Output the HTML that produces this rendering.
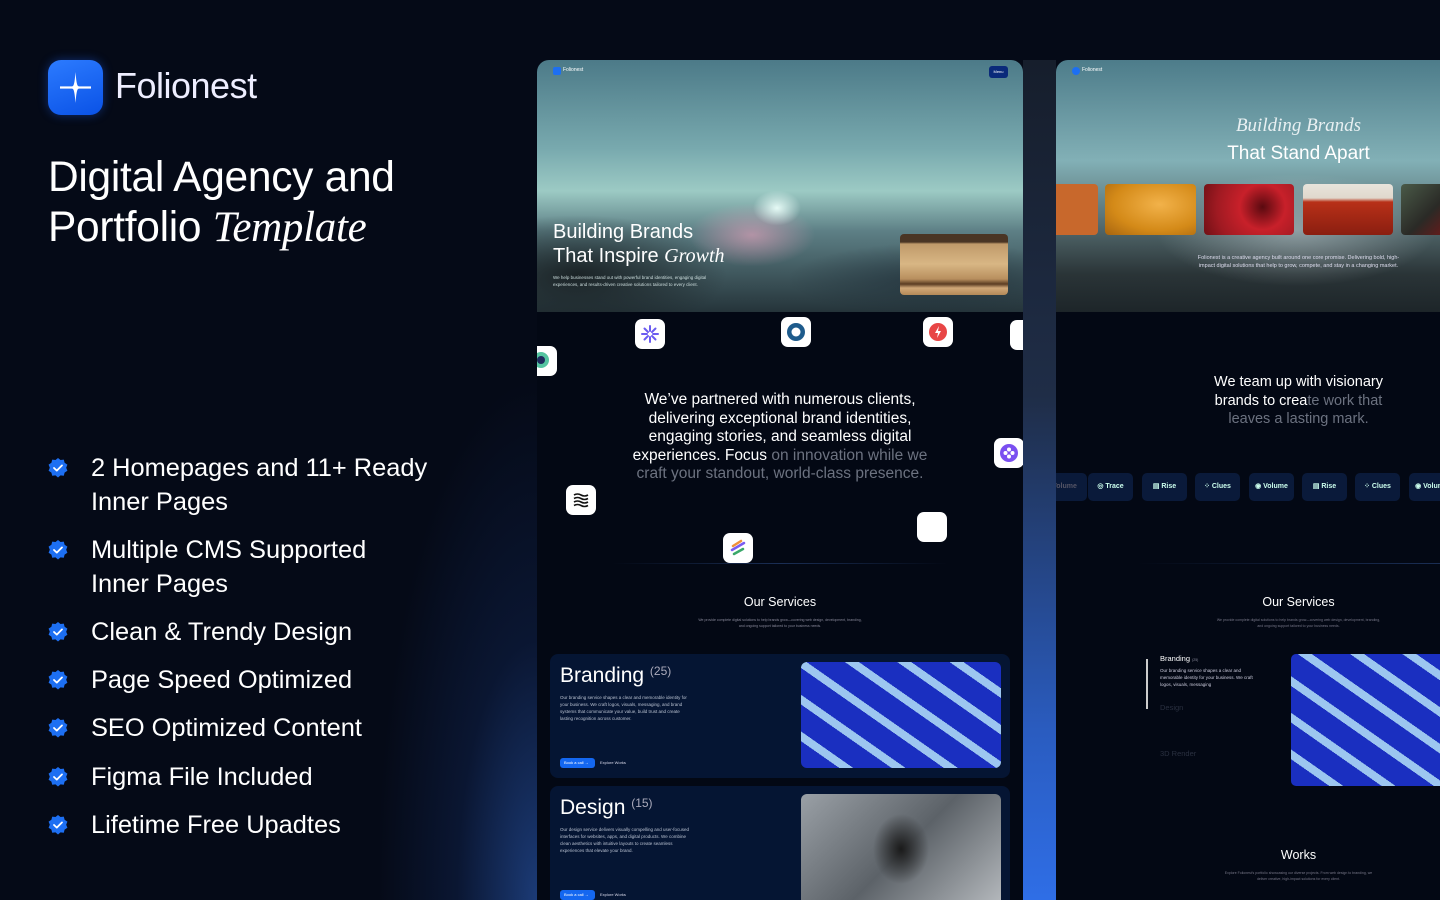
<!DOCTYPE html>
<html><head><meta charset="utf-8">
<style>
*{margin:0;padding:0;box-sizing:border-box}
body{width:1440px;height:900px;overflow:hidden;background:#050a17;font-family:"Liberation Sans",sans-serif;color:#fff;position:relative}
.abs{position:absolute}
.serif{font-family:"Liberation Serif",serif;font-style:italic;font-weight:normal}
.glowL{left:380px;top:200px;width:157px;height:700px;background:radial-gradient(ellipse 160px 520px at 100% 100%,rgba(35,75,150,.75),rgba(20,45,100,.35) 50%,rgba(5,10,23,0) 100%);}
.gap{left:1023px;top:60px;width:33px;height:840px;background:linear-gradient(180deg,#161e2c 0%,#1f2d47 40%,#2a5cc0 80%,#2f6ee6 100%)}
.m1{left:537px;top:60px;width:486px;height:840px;background:#030814;border-radius:12px 12px 0 0;overflow:hidden}
.m2{left:1056px;top:60px;width:384px;height:840px;background:#030814;border-radius:12px 0 0 0;overflow:hidden}
.hero1{position:absolute;left:0;top:0;width:486px;height:252px;
background:
radial-gradient(ellipse 30px 22px at 240px 148px,rgba(235,255,250,.95),rgba(255,220,230,0) 80%),
radial-gradient(ellipse 90px 45px at 215px 175px,rgba(225,160,185,.65),rgba(0,0,0,0) 70%),
radial-gradient(ellipse 200px 80px at 40px 215px,rgba(25,32,35,.95),rgba(0,0,0,0) 75%),
radial-gradient(ellipse 200px 50px at 400px 220px,rgba(30,45,55,.7),rgba(0,0,0,0) 75%),
linear-gradient(180deg,#4c7a88 0%,#78a9ae 35%,#9ccac4 52%,#5d7f85 68%,#25343a 100%)}
.hero2{position:absolute;left:0;top:0;width:384px;height:252px;
background:radial-gradient(ellipse 200px 80px at 240px 170px,rgba(220,230,235,.45),rgba(0,0,0,0) 70%),
linear-gradient(180deg,#4d7c8a 0%,#82b0b6 40%,#5b7478 62%,#2a3437 85%,#1d2529 100%)}
.ic{position:absolute;width:30px;height:30px;background:#fff;border-radius:7px}
.card{position:absolute;left:13px;width:460px;height:124px;background:#051533;border-radius:8px}
.card h3{position:absolute;left:10px;top:10px;font-size:21px;font-weight:normal}
.card h3 sup{font-size:12px;color:#aab;vertical-align:top}
.card p{position:absolute;left:10px;top:40px;width:130px;font-size:4.5px;line-height:7px;color:#b8c0d0}
.btn{position:absolute;left:10px;top:104px;width:35px;height:10px;background:#1467f0;border-radius:3px;font-size:4px;line-height:10px;padding-left:4px}
.btn2{position:absolute;left:50px;top:104px;font-size:4px;line-height:10px;color:#dde}
.tile{position:absolute;left:251px;top:8px;width:200px;height:106px;border-radius:6px}
.blue{background:repeating-linear-gradient(35deg,#1a2fc0 0 22px,#9cc6f0 22px 30px),#1a2fc0}
.feat{position:absolute;left:48px;font-size:25.4px;line-height:34px;color:#fff}
.chk{position:absolute;left:-1px;top:6px;width:22px;height:22px}
.logo-pill{position:absolute;top:413px;width:45px;height:28px;background:#0a1a3a;border-radius:5px;font-size:7px;color:#cfe;text-align:center;line-height:28px;font-weight:bold}
</style></head><body>

<div class="abs" style="left:48px;top:60px;width:55px;height:55px;border-radius:13px;background:linear-gradient(160deg,#2c7bff,#0a52e6);box-shadow:0 0 10px rgba(30,100,255,.4)">
<svg width="55" height="55" viewBox="0 0 55 55"><path d="M27.5 12 C28.2 21 28.8 24.5 30 26 C31.5 27 35 27.3 43 27.5 C35 27.7 31.5 28 30 29 C28.8 30.5 28.2 34 27.5 43 C26.8 34 26.2 30.5 25 29 C23.5 28 20 27.7 12 27.5 C20 27.3 23.5 27 25 26 C26.2 24.5 26.8 21 27.5 12Z" fill="#fff"/><rect x="12" y="26.4" width="31" height="2.2" fill="#fff"/></svg></div>
<div class="abs" style="left:115px;top:65px;font-size:36px;letter-spacing:-0.5px;color:#eef">Folionest</div>
<div class="abs" style="left:48px;top:153px;font-size:42.5px;line-height:50px;letter-spacing:-0.3px">Digital Agency and<br>Portfolio <span class="serif" style="font-size:43px">Template</span></div>

<svg width="0" height="0" style="position:absolute"><defs><symbol id="ck" viewBox="0 0 22 22"><path d="M11 1 L13.5 3 L16.8 2.6 L17.6 5.8 L20.4 7.6 L19.2 10.7 L20.4 13.8 L17.6 15.6 L16.8 18.8 L13.5 18.4 L11 20.5 L8.5 18.4 L5.2 18.8 L4.4 15.6 L1.6 13.8 L2.8 10.7 L1.6 7.6 L4.4 5.8 L5.2 2.6 L8.5 3Z" fill="#1d6ff2"/><path d="M7 11 L9.8 13.6 L15 8.4" stroke="#fff" stroke-width="1.8" fill="none" stroke-linecap="round" stroke-linejoin="round"/></symbol></defs></svg>
<div class="feat" style="top:451px"><svg class="chk"><use href="#ck"/></svg><div style="padding-left:43px">2 Homepages and 11+ Ready<br>Inner Pages</div></div>
<div class="feat" style="top:533px"><svg class="chk"><use href="#ck"/></svg><div style="padding-left:43px">Multiple CMS Supported<br>Inner Pages</div></div>
<div class="feat" style="top:615px"><svg class="chk"><use href="#ck"/></svg><div style="padding-left:43px">Clean &amp; Trendy Design</div></div>
<div class="feat" style="top:663px"><svg class="chk"><use href="#ck"/></svg><div style="padding-left:43px">Page Speed Optimized</div></div>
<div class="feat" style="top:711px"><svg class="chk"><use href="#ck"/></svg><div style="padding-left:43px">SEO Optimized Content</div></div>
<div class="feat" style="top:760px"><svg class="chk"><use href="#ck"/></svg><div style="padding-left:43px">Figma File Included</div></div>
<div class="feat" style="top:808px"><svg class="chk"><use href="#ck"/></svg><div style="padding-left:43px">Lifetime Free Upadtes</div></div>

<div class="abs glowL"></div>
<div class="abs gap"></div>

<div class="abs m1">
 <div class="hero1"></div>
 <div class="abs" style="left:16px;top:7px;width:8px;height:8px;border-radius:2px;background:#1d6ff2"></div>
 <div class="abs" style="left:26px;top:7px;font-size:5px;color:#fff">Folionest</div>
 <div class="abs" style="left:452px;top:6px;width:19px;height:12px;border-radius:3px;background:#0a2a7a;font-size:4px;line-height:12px;text-align:center">Menu</div>
 <div class="abs" style="left:16px;top:160px;font-size:20px;line-height:24px">Building Brands<br>That Inspire <span class="serif" style="font-size:20px">Growth</span></div>
 <div class="abs" style="left:16px;top:214px;width:165px;font-size:4.5px;line-height:7px;color:#cdd">We help businesses stand out with powerful brand identities, engaging digital experiences, and results-driven creative solutions tailored to every client.</div>
 <div class="abs" style="left:363px;top:174px;width:108px;height:61px;border-radius:4px;background:linear-gradient(180deg,#4a3524 0,#4a3524 8px,#c09a6a 10px,#d8b684 30px,#b88f5e 45px,#5a3c22 50px,#d0a878 54px,#b38958 61px)"></div>

 <div class="ic" style="left:98px;top:259px"><svg width="30" height="30"><g stroke="#6b5cf0" stroke-width="2" stroke-linecap="round"><path d="M15 7v5M15 18v5M7 15h5M18 15h5M9.5 9.5l3.5 3.5M17 17l3.5 3.5M20.5 9.5L17 13M13 17l-3.5 3.5"/></g></svg></div>
 <div class="ic" style="left:244px;top:257px"><svg width="30" height="30"><circle cx="15" cy="15" r="9" fill="#1e5b8c"/><circle cx="15" cy="15" r="4.5" fill="#fff"/></svg></div>
 <div class="ic" style="left:386px;top:257px"><svg width="30" height="30"><circle cx="15" cy="15" r="9" fill="#e84545"/><path d="M16 9l-4 7h3l-1 5 4-7h-3z" fill="#fff"/></svg></div>
 <div class="ic" style="left:473px;top:260px"></div>
 <div class="ic" style="left:-10px;top:286px"><svg width="30" height="30"><circle cx="14" cy="14" r="8" fill="#55c4a0"/><circle cx="14" cy="14" r="4" fill="#1e2a5c"/></svg></div>
 <div class="ic" style="left:457px;top:378px"><svg width="30" height="30"><circle cx="15" cy="15" r="9" fill="#7a4ff0"/><circle cx="15" cy="11.5" r="2" fill="#fff"/><circle cx="15" cy="18.5" r="2" fill="#fff"/><circle cx="11.5" cy="15" r="2" fill="#fff"/><circle cx="18.5" cy="15" r="2" fill="#fff"/></svg></div>
 <div class="ic" style="left:29px;top:425px"><svg width="30" height="30"><g stroke="#111" stroke-width="1.6" fill="none"><path d="M8 10q3.5-2 7 0t7 0M8 13.5q3.5-2 7 0t7 0M8 17q3.5-2 7 0t7 0M8 20.5q3.5-2 7 0t7 0"/></g></svg></div>
 <div class="ic" style="left:380px;top:452px"></div>
 <div class="ic" style="left:186px;top:473px"><svg width="30" height="30"><path d="M10 13l8-5" stroke="#f0923a" stroke-width="2.5" stroke-linecap="round"/><path d="M9 17l12-7" stroke="#7a5cf0" stroke-width="2.5" stroke-linecap="round"/><path d="M11 21l9-5" stroke="#3aa86a" stroke-width="2.5" stroke-linecap="round"/></svg></div>

 <div class="abs" style="left:0;top:331px;width:486px;text-align:center;font-size:15.5px;line-height:18.5px;color:#fff">We’ve partnered with numerous clients,<br>delivering exceptional brand identities,<br>engaging stories, and seamless digital<br>experiences. Focus <span style="color:#6c7280">on innovation while we<br>craft your standout, world-class presence.</span></div>
 <div class="abs" style="left:75px;top:503px;width:336px;height:1px;background:linear-gradient(90deg,transparent,#1a2e55,transparent)"></div>
 <div class="abs" style="left:0;top:535px;width:486px;text-align:center;font-size:12.5px">Our Services</div>
 <div class="abs" style="left:160px;top:557px;width:166px;text-align:center;font-size:3.5px;line-height:6px;color:#889">We provide complete digital solutions to help brands grow—covering web design, development, branding, and ongoing support tailored to your business needs.</div>

 <div class="card" style="top:594px"><h3>Branding <sup>(25)</sup></h3><p>Our branding service shapes a clear and memorable identity for your business. We craft logos, visuals, messaging, and brand systems that communicate your value, build trust and create lasting recognition across customer.</p><div class="btn">Book a call →</div><div class="btn2">Explore Works</div><div class="tile blue"></div></div>
 <div class="card" style="top:726px"><h3>Design <sup>(15)</sup></h3><p>Our design service delivers visually compelling and user-focused interfaces for websites, apps, and digital products. We combine clean aesthetics with intuitive layouts to create seamless experiences that elevate your brand.</p><div class="btn">Book a call →</div><div class="btn2">Explore Works</div><div class="tile" style="background:radial-gradient(ellipse 40px 50px at 100px 55px,#1a1a1a,rgba(0,0,0,0) 70%),linear-gradient(135deg,#9aa0a6,#5c6268 50%,#b8bcc0);height:116px"></div></div>
</div>

<div class="abs m2">
 <div class="hero2"></div>
 <div class="abs" style="left:16px;top:7px;width:8px;height:8px;border-radius:4px;background:#1d6ff2"></div>
 <div class="abs" style="left:26px;top:7px;font-size:5px">Folionest</div>
 <div class="abs" style="left:80px;top:55px;width:325px;text-align:center;font-size:19px" ><span class="serif" style="color:#e8f0f2">Building Brands</span></div>
 <div class="abs" style="left:80px;top:83px;width:325px;text-align:center;font-size:19px">That Stand Apart</div>
 <div class="abs" style="left:-5px;top:124px;width:47px;height:51px;border-radius:4px;background:#c8682c"></div>
 <div class="abs" style="left:49px;top:124px;width:91px;height:51px;border-radius:4px;background:radial-gradient(ellipse at 60% 40%,#f2b24a,#d48a18 60%,#a66410)"></div>
 <div class="abs" style="left:148px;top:124px;width:90px;height:51px;border-radius:4px;background:radial-gradient(circle at 65% 45%,#5a0a10,#c8202a 35%,#a01a22 70%,#701015)"></div>
 <div class="abs" style="left:247px;top:124px;width:90px;height:51px;border-radius:4px;background:linear-gradient(180deg,#e8e4dc 0,#e0d8cc 14px,#b83018 18px,#8a1e10 51px)"></div>
 <div class="abs" style="left:345px;top:124px;width:45px;height:51px;border-radius:4px;background:linear-gradient(135deg,#4a5a48,#2a2a26 60%,#6a1a1a)"></div>
 <div class="abs" style="left:140px;top:194px;width:205px;text-align:center;font-size:5.5px;line-height:8px;color:#dde">Folionest is a creative agency built around one core promise. Delivering bold, high-impact digital solutions that help to grow, compete, and stay in a changing market.</div>
 <div class="abs" style="left:60px;top:313px;width:365px;text-align:center;font-size:14.5px;line-height:18.5px">We team up with visionary<br>brands to crea<span style="color:#6c7280">te work that<br>leaves a lasting mark.</span></div>
 <div class="logo-pill" style="left:-14px;color:#556">Volume</div>
 <div class="logo-pill" style="left:32px">◎ Trace</div>
 <div class="logo-pill" style="left:86px">▤ Rise</div>
 <div class="logo-pill" style="left:139px">⁘ Clues</div>
 <div class="logo-pill" style="left:193px">◉ Volume</div>
 <div class="logo-pill" style="left:246px">▤ Rise</div>
 <div class="logo-pill" style="left:299px">⁘ Clues</div>
 <div class="logo-pill" style="left:353px">◉ Volume</div>
 <div class="abs" style="left:80px;top:503px;width:304px;height:1px;background:linear-gradient(90deg,transparent,#1a2e55)"></div>
 <div class="abs" style="left:80px;top:535px;width:325px;text-align:center;font-size:12.5px">Our Services</div>
 <div class="abs" style="left:160px;top:557px;width:165px;text-align:center;font-size:3.5px;line-height:6px;color:#778">We provide complete digital solutions to help brands grow—covering web design, development, branding, and ongoing support tailored to your business needs.</div>
 <div class="abs" style="left:90px;top:599px;width:1.5px;height:50px;background:#ccc"></div>
 <div class="abs" style="left:104px;top:594px;font-size:7.5px">Branding <span style="font-size:3.5px;color:#889">(25)</span></div>
 <div class="abs" style="left:104px;top:607px;width:100px;font-size:4.5px;line-height:7px;color:#ccd">Our branding service shapes a clear and memorable identity for your business. We craft logos, visuals, messaging</div>
 <div class="abs" style="left:104px;top:643px;font-size:7.5px;color:#2a3040">Design</div>
 <div class="abs" style="left:104px;top:689px;font-size:7.5px;color:#2a3040">3D Render</div>
 <div class="abs blue" style="left:235px;top:594px;width:160px;height:132px;border-radius:5px"></div>
 <div class="abs" style="left:80px;top:788px;width:325px;text-align:center;font-size:12.5px">Works</div>
 <div class="abs" style="left:165px;top:810px;width:155px;text-align:center;font-size:3.5px;line-height:6px;color:#778">Explore Folionest’s portfolio showcasing our diverse projects. From web design to branding, we deliver creative, high-impact solutions for every client.</div>
</div>
</body></html>
